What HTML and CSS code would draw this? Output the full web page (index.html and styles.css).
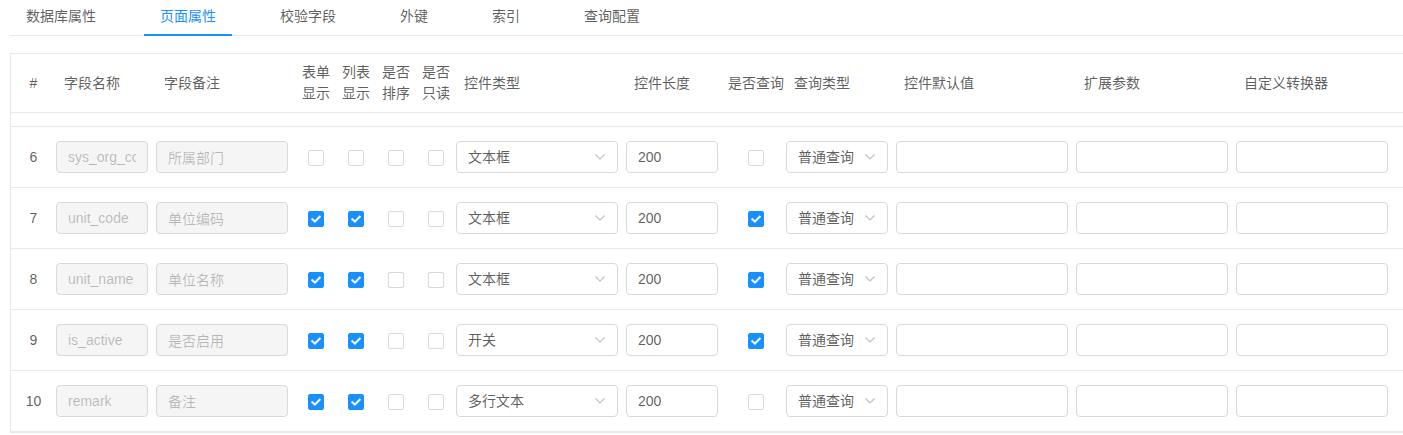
FILE: index.html
```html
<!DOCTYPE html>
<html lang="zh-CN">
<head>
<meta charset="utf-8">
<title>页面属性</title>
<link rel="stylesheet" href="styles.css">
</head>
<body>
<div class="page">
  <div class="tabs">
    <div class="tab">数据库属性</div>
    <div class="tab active">页面属性</div>
    <div class="tab">校验字段</div>
    <div class="tab">外键</div>
    <div class="tab">索引</div>
    <div class="tab">查询配置</div>
  </div>

  <table class="grid">
    <colgroup>
      <col class="c-idx"><col class="c-name"><col class="c-remark">
      <col class="c-cb"><col class="c-cb"><col class="c-cb"><col class="c-cb">
      <col class="c-ctype"><col class="c-len"><col class="c-q"><col class="c-qtype">
      <col class="c-def"><col class="c-ext"><col class="c-conv">
    </colgroup>
    <thead>
      <tr>
        <th class="center">#</th>
        <th>字段名称</th>
        <th>字段备注</th>
        <th class="center">表单<br>显示</th>
        <th class="center">列表<br>显示</th>
        <th class="center">是否<br>排序</th>
        <th class="center">是否<br>只读</th>
        <th>控件类型</th>
        <th>控件长度</th>
        <th class="center">是否查询</th>
        <th>查询类型</th>
        <th>控件默认值</th>
        <th>扩展参数</th>
        <th>自定义转换器</th>
      </tr>
    </thead>
    <tbody>
      <tr class="spacer"><td colspan="14"></td></tr>

      <tr>
        <td class="center">6</td>
        <td><input class="inp w92" disabled value="sys_org_code"></td>
        <td><input class="inp w132" disabled value="所属部门"></td>
        <td class="center"><span class="cb"></span></td>
        <td class="center"><span class="cb"></span></td>
        <td class="center"><span class="cb"></span></td>
        <td class="center"><span class="cb"></span></td>
        <td><div class="sel w162"><span>文本框</span><svg class="arrow" viewBox="0 0 10 6"><polyline points="0.5,0.5 5,5 9.5,0.5"/></svg></div></td>
        <td><input class="inp w92 val" value="200"></td>
        <td class="center"><span class="cb"></span></td>
        <td><div class="sel w102"><span>普通查询</span><svg class="arrow" viewBox="0 0 10 6"><polyline points="0.5,0.5 5,5 9.5,0.5"/></svg></div></td>
        <td><input class="inp w172 val"></td>
        <td><input class="inp w152 val"></td>
        <td><input class="inp w152 val"></td>
      </tr>

      <tr>
        <td class="center">7</td>
        <td><input class="inp w92" disabled value="unit_code"></td>
        <td><input class="inp w132" disabled value="单位编码"></td>
        <td class="center"><span class="cb on"><svg viewBox="0 0 16 16"><polyline points="4.3,8.2 6.9,10.7 11.7,5.7"/></svg></span></td>
        <td class="center"><span class="cb on"><svg viewBox="0 0 16 16"><polyline points="4.3,8.2 6.9,10.7 11.7,5.7"/></svg></span></td>
        <td class="center"><span class="cb"></span></td>
        <td class="center"><span class="cb"></span></td>
        <td><div class="sel w162"><span>文本框</span><svg class="arrow" viewBox="0 0 10 6"><polyline points="0.5,0.5 5,5 9.5,0.5"/></svg></div></td>
        <td><input class="inp w92 val" value="200"></td>
        <td class="center"><span class="cb on"><svg viewBox="0 0 16 16"><polyline points="4.3,8.2 6.9,10.7 11.7,5.7"/></svg></span></td>
        <td><div class="sel w102"><span>普通查询</span><svg class="arrow" viewBox="0 0 10 6"><polyline points="0.5,0.5 5,5 9.5,0.5"/></svg></div></td>
        <td><input class="inp w172 val"></td>
        <td><input class="inp w152 val"></td>
        <td><input class="inp w152 val"></td>
      </tr>

      <tr>
        <td class="center">8</td>
        <td><input class="inp w92" disabled value="unit_name"></td>
        <td><input class="inp w132" disabled value="单位名称"></td>
        <td class="center"><span class="cb on"><svg viewBox="0 0 16 16"><polyline points="4.3,8.2 6.9,10.7 11.7,5.7"/></svg></span></td>
        <td class="center"><span class="cb on"><svg viewBox="0 0 16 16"><polyline points="4.3,8.2 6.9,10.7 11.7,5.7"/></svg></span></td>
        <td class="center"><span class="cb"></span></td>
        <td class="center"><span class="cb"></span></td>
        <td><div class="sel w162"><span>文本框</span><svg class="arrow" viewBox="0 0 10 6"><polyline points="0.5,0.5 5,5 9.5,0.5"/></svg></div></td>
        <td><input class="inp w92 val" value="200"></td>
        <td class="center"><span class="cb on"><svg viewBox="0 0 16 16"><polyline points="4.3,8.2 6.9,10.7 11.7,5.7"/></svg></span></td>
        <td><div class="sel w102"><span>普通查询</span><svg class="arrow" viewBox="0 0 10 6"><polyline points="0.5,0.5 5,5 9.5,0.5"/></svg></div></td>
        <td><input class="inp w172 val"></td>
        <td><input class="inp w152 val"></td>
        <td><input class="inp w152 val"></td>
      </tr>

      <tr>
        <td class="center">9</td>
        <td><input class="inp w92" disabled value="is_active"></td>
        <td><input class="inp w132" disabled value="是否启用"></td>
        <td class="center"><span class="cb on"><svg viewBox="0 0 16 16"><polyline points="4.3,8.2 6.9,10.7 11.7,5.7"/></svg></span></td>
        <td class="center"><span class="cb on"><svg viewBox="0 0 16 16"><polyline points="4.3,8.2 6.9,10.7 11.7,5.7"/></svg></span></td>
        <td class="center"><span class="cb"></span></td>
        <td class="center"><span class="cb"></span></td>
        <td><div class="sel w162"><span>开关</span><svg class="arrow" viewBox="0 0 10 6"><polyline points="0.5,0.5 5,5 9.5,0.5"/></svg></div></td>
        <td><input class="inp w92 val" value="200"></td>
        <td class="center"><span class="cb on"><svg viewBox="0 0 16 16"><polyline points="4.3,8.2 6.9,10.7 11.7,5.7"/></svg></span></td>
        <td><div class="sel w102"><span>普通查询</span><svg class="arrow" viewBox="0 0 10 6"><polyline points="0.5,0.5 5,5 9.5,0.5"/></svg></div></td>
        <td><input class="inp w172 val"></td>
        <td><input class="inp w152 val"></td>
        <td><input class="inp w152 val"></td>
      </tr>

      <tr>
        <td class="center">10</td>
        <td><input class="inp w92" disabled value="remark"></td>
        <td><input class="inp w132" disabled value="备注"></td>
        <td class="center"><span class="cb on"><svg viewBox="0 0 16 16"><polyline points="4.3,8.2 6.9,10.7 11.7,5.7"/></svg></span></td>
        <td class="center"><span class="cb on"><svg viewBox="0 0 16 16"><polyline points="4.3,8.2 6.9,10.7 11.7,5.7"/></svg></span></td>
        <td class="center"><span class="cb"></span></td>
        <td class="center"><span class="cb"></span></td>
        <td><div class="sel w162"><span>多行文本</span><svg class="arrow" viewBox="0 0 10 6"><polyline points="0.5,0.5 5,5 9.5,0.5"/></svg></div></td>
        <td><input class="inp w92 val" value="200"></td>
        <td class="center"><span class="cb"></span></td>
        <td><div class="sel w102"><span>普通查询</span><svg class="arrow" viewBox="0 0 10 6"><polyline points="0.5,0.5 5,5 9.5,0.5"/></svg></div></td>
        <td><input class="inp w172 val"></td>
        <td><input class="inp w152 val"></td>
        <td><input class="inp w152 val"></td>
      </tr>
    </tbody>
  </table>
</div>
</body>
</html>
```

FILE: styles.css
```css
html, body {
  margin: 0;
  padding: 0;
  background: #fff;
  overflow: hidden;
}

body {
  font-family: "Liberation Sans", "Noto Sans CJK SC", sans-serif;
  font-size: 14px;
  line-height: 21px;
  color: rgba(0, 0, 0, 0.65);
}

.page {
  margin-left: 10px;
  width: 1400px;
}

/* Tabs */
.tabs {
  display: flex;
  border-bottom: 1px solid #e8e8e8;
}

.tab {
  padding: 6px 16px 7px;
  margin-right: 32px;
  margin-bottom: -1px;
  border-bottom: 2px solid transparent;
  white-space: nowrap;
  color: rgba(0, 0, 0, 0.65);
}

.tab.active {
  color: #1890ff;
  border-bottom-color: #1890ff;
}

/* Table */
.grid {
  margin-top: 17px;
  border: 1px solid #e8e8e8;
  border-collapse: separate;
  border-spacing: 0;
  table-layout: fixed;
  width: 1400px;
}

.c-idx { width: 45px; }
.c-name { width: 100px; }
.c-remark { width: 140px; }
.c-cb { width: 40px; }
.c-ctype { width: 170px; }
.c-len { width: 100px; }
.c-q { width: 60px; }
.c-qtype { width: 110px; }
.c-def { width: 180px; }
.c-ext { width: 160px; }
.c-conv { width: 173px; }

.grid th {
  font-weight: normal;
  text-align: left;
  padding: 8px 0 8px 8px;
  border-bottom: 1px solid #e8e8e8;
  white-space: nowrap;
  vertical-align: middle;
  color: rgba(0, 0, 0, 0.65);
}

.grid th.center {
  text-align: center;
  padding-left: 0;
}

.grid td {
  padding: 14px 0;
  border-bottom: 1px solid #e8e8e8;
  vertical-align: middle;
  text-align: left;
}

.grid td.center {
  text-align: center;
}

.grid tr.spacer td {
  padding: 0;
  height: 13px;
}

/* Inputs */
.inp {
  box-sizing: border-box;
  display: block;
  height: 32px;
  padding: 4px 11px;
  margin: 0;
  border: 1px solid #d9d9d9;
  border-radius: 4px;
  background: #fff;
  font: inherit;
  color: rgba(0, 0, 0, 0.65);
  outline: none;
}

.inp:disabled {
  background: #f5f5f5;
  color: rgba(0, 0, 0, 0.25);
  -webkit-text-fill-color: rgba(0, 0, 0, 0.25);
  opacity: 1;
}

.w92 { width: 92px; }
.w102 { width: 102px; }
.w132 { width: 132px; }
.w152 { width: 152px; }
.w162 { width: 162px; }
.w172 { width: 172px; }

/* Select */
.sel {
  box-sizing: border-box;
  height: 32px;
  display: flex;
  align-items: center;
  justify-content: space-between;
  padding: 0 12px 0 11px;
  border: 1px solid #d9d9d9;
  border-radius: 4px;
  background: #fff;
  white-space: nowrap;
  color: rgba(0, 0, 0, 0.65);
}

.arrow {
  width: 10px;
  height: 6px;
  flex: none;
  fill: none;
  stroke: #bfbfbf;
  stroke-width: 1.1;
}

/* Checkbox */
.cb {
  box-sizing: border-box;
  display: inline-block;
  width: 16px;
  height: 16px;
  border: 1px solid #d9d9d9;
  border-radius: 2px;
  background: #fff;
  vertical-align: middle;
  position: relative;
}

.cb.on {
  background: #1890ff;
  border-color: #1890ff;
}

.cb svg {
  position: absolute;
  left: -1px;
  top: -1px;
  width: 16px;
  height: 16px;
  fill: none;
  stroke: #fff;
  stroke-width: 2;
  stroke-linecap: square;
}
```
